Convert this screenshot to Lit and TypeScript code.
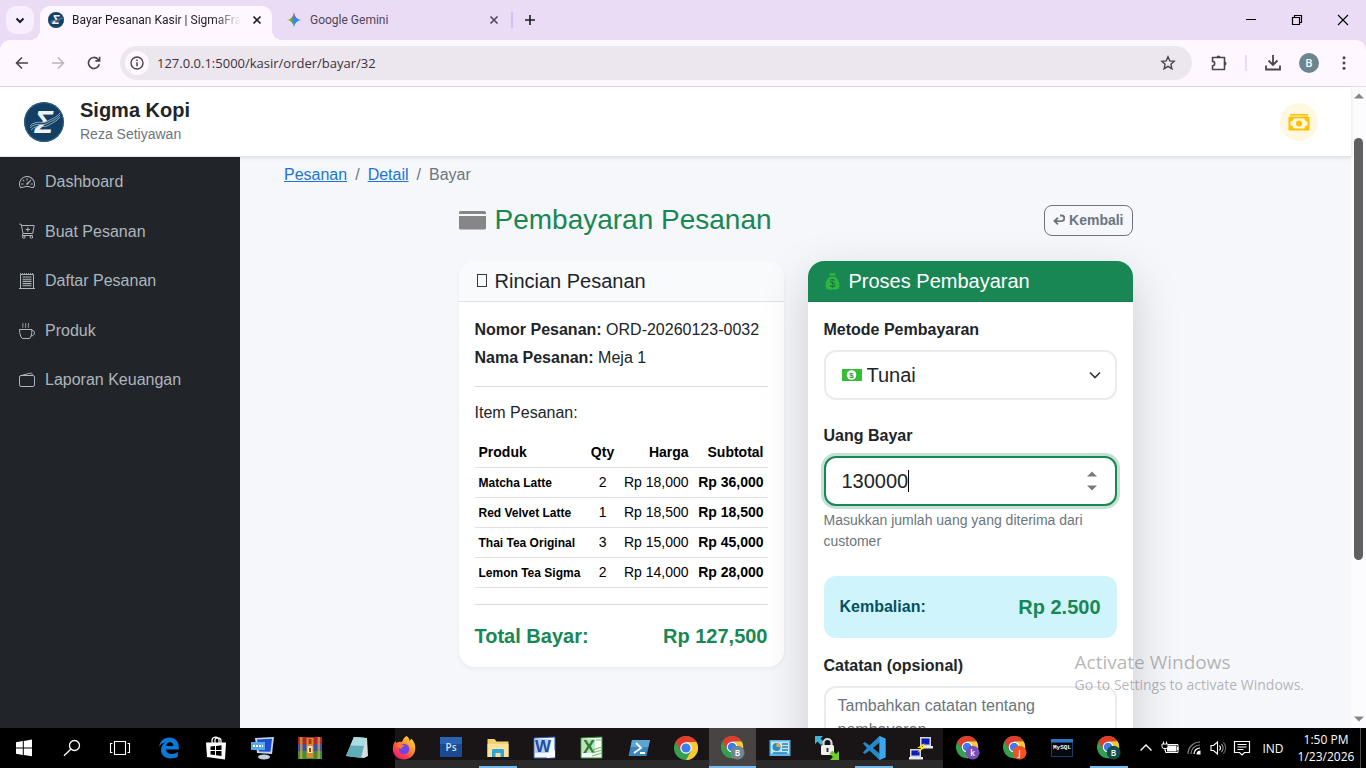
import { LitElement, css, html, svg, nothing } from "lit";
import type { SVGTemplateResult } from "lit";
import { customElement, property, state } from "lit/decorators.js";
import { classMap } from "lit/directives/class-map.js";

const SANS = css`"Liberation Sans", Arial, sans-serif`;
const UI = css`"Open Sans", "Noto Sans", sans-serif`;

/* ---------- icons ---------- */

interface Icon {
  box: string;
  body: SVGTemplateResult;
}

const chromeBody = (letter = "", badge = "") => svg`
  <circle cx="12" cy="12" r="12" fill="#34a04f" />
  <path d="M1.6 6A12 12 0 0 1 22.4 6H12L6.8 15z" fill="#e33b2e" />
  <path d="M22.4 6A12 12 0 0 1 12 24l5.2-9L12 6z" fill="#fcc934" />
  <circle cx="12" cy="12" r="5.8" fill="#fff" />
  <circle cx="12" cy="12" r="4.6" fill="#3b7ded" />
  ${
    letter
      ? svg`<circle cx="18" cy="18" r="7.5" fill=${badge} />
          <text x="18" y="21.2" text-anchor="middle" font-size="9" font-weight="600"
            font-family="Open Sans, sans-serif" fill="#fff">${letter}</text>`
      : nothing
  }`;

const ICONS: Record<string, Icon> = {
  logo: {
    box: "0 0 40 40",
    body: svg`
      <circle cx="20" cy="20" r="20" fill="#123f63" />
      <circle cx="20" cy="20" r="19.2" fill="none" stroke="#3d6b89" stroke-width=".8" />
      <text x="20" y="30.500" text-anchor="middle" font-size="31" font-weight="700" font-style="italic"
        font-family="Liberation Sans, sans-serif" fill="#eef2f7">Σ</text>
      <path d="M6 25c7-7 12-1 18-5 5-3 8-3 12-8" fill="none" stroke="#123f63" stroke-width="2.500" />
      <path d="M6 24c7-7 12-1 18-5 5-3 8-3 12-8M6 26c7-7 12-1 18-5 5-3 8-3 12-8M7 28c7-7 12-1 18-5 5-3 8-4 11-8"
        fill="none" stroke="#c5d5e2" stroke-width=".7" />`,
  },
  gemini: {
    box: "0 0 16 16",
    body: svg`
      <defs>
        <linearGradient id="gem-h" x1="0" y1="0" x2="1" y2="0">
          <stop offset="0" stop-color="#f5b915" />
          <stop offset=".4" stop-color="#3fa66a" />
          <stop offset=".55" stop-color="#3186ff" />
          <stop offset="1" stop-color="#3186ff" />
        </linearGradient>
        <linearGradient id="gem-v" x1="0" y1="0" x2="0" y2="1">
          <stop offset="0" stop-color="#ee4035" />
          <stop offset=".45" stop-color="#ee4035" stop-opacity="0" />
        </linearGradient>
      </defs>
      <path d="M8 .5C8.600 4.800 11.200 7.400 15.500 8 11.200 8.600 8.600 11.200 8 15.500 7.400 11.200 4.800 8.600.5 8 4.800 7.400 7.400 4.800 8 .5z" fill="url(#gem-h)" />
      <path d="M8 .5C8.600 4.800 11.200 7.400 15.500 8 11.200 8.600 8.600 11.200 8 15.500 7.400 11.200 4.800 8.600.5 8 4.800 7.400 7.400 4.800 8 .5z" fill="url(#gem-v)" />`,
  },
  chevron: {
    box: "0 0 16 16",
    body: svg`<path d="M4.500 6.500 8 10l3.500-3.500" fill="none" stroke="currentColor" stroke-width="2" />`,
  },
  close: {
    box: "0 0 16 16",
    body: svg`<path d="m4.500 4.500 7 7m0-7-7 7" stroke="currentColor" stroke-width="1.600" />`,
  },
  plus: {
    box: "0 0 16 16",
    body: svg`<path d="M8 3v10M3 8h10" stroke="currentColor" stroke-width="1.600" />`,
  },
  minimize: {
    box: "0 0 16 16",
    body: svg`<path d="M3 7.500h10" stroke="currentColor" />`,
  },
  restore: {
    box: "0 0 16 16",
    body: svg`<path d="M3.500 5.500h7v7h-7zM5.500 5.500v-2h7v7h-2" fill="none" stroke="currentColor" stroke-width="1.200" />`,
  },
  quit: {
    box: "0 0 16 16",
    body: svg`<path d="m3 3 10 10M13 3 3 13" stroke="currentColor" stroke-width="1.100" />`,
  },
  back: {
    box: "0 0 16 16",
    body: svg`<path d="M14 8H3M8 2.500 2.500 8 8 13.500" fill="none" stroke="currentColor" stroke-width="1.600" />`,
  },
  forward: {
    box: "0 0 16 16",
    body: svg`<path d="M2 8h11M8 2.500 13.500 8 8 13.500" fill="none" stroke="currentColor" stroke-width="1.600" />`,
  },
  reload: {
    box: "0 0 16 16",
    body: svg`<path d="M13.300 9.200A5.500 5.500 0 1 1 12 4.200l1.400 1.400M13.600 1.800v4.100H9.400" fill="none" stroke="currentColor" stroke-width="1.600" />`,
  },
  info: {
    box: "0 0 16 16",
    body: svg`<circle cx="8" cy="8" r="6" fill="none" stroke="currentColor" stroke-width="1.400" />
      <path d="M8 7.200v4M8 4.600v1.500" stroke="currentColor" stroke-width="1.500" />`,
  },
  star: {
    box: "0 0 16 16",
    body: svg`<path d="m8 1.800 1.800 4.100 4.400.4-3.300 3 1 4.400L8 11.400l-3.900 2.300 1-4.400-3.300-3 4.400-.4z" fill="none" stroke="currentColor" stroke-width="1.400" />`,
  },
  puzzle: {
    box: "0 0 18 18",
    body: svg`<path d="M2.500 3.500h12v12h-12v-3.700a2.200 2.200 0 0 0 0-4.400z" fill="none" stroke="currentColor" stroke-width="1.600" stroke-linejoin="round" />
      <path d="M6.500 3.500a2 2 0 0 1 4 0zM14.500 7.500a2 2 0 0 1 0 4z" fill="currentColor" />`,
  },
  download: {
    box: "0 0 18 18",
    body: svg`<path d="M9 1v9.500M4.500 6.500 9 11l4.500-4.500M2 11.500v4h14v-4" fill="none" stroke="currentColor" stroke-width="1.800" />`,
  },
  dots: {
    box: "0 0 16 16",
    body: svg`<g fill="currentColor"><circle cx="8" cy="2.800" r="1.500" /><circle cx="8" cy="8" r="1.500" /><circle cx="8" cy="13.200" r="1.500" /></g>`,
  },
  up: {
    box: "0 0 10 6",
    body: svg`<path d="M0 5.500h10L5 .5z" fill="currentColor" />`,
  },
  down: {
    box: "0 0 10 6",
    body: svg`<path d="M0 .5h10l-5 5z" fill="currentColor" />`,
  },
  cash: {
    box: "0 0 22 18",
    body: svg`<path d="M2 1h18v1.600H2z" fill="#ffc107" />
      <rect x=".5" y="3.500" width="21" height="14" rx="1.200" fill="#ffc107" />
      <path d="M5.500 5.500h11a3 3 0 0 0 3 3v4a3 3 0 0 0-3 3h-11a3 3 0 0 0-3-3v-4a3 3 0 0 0 3-3z" fill="#fff8e1" />
      <circle cx="11" cy="10.500" r="3" fill="#ffc107" />`,
  },
  dashboard: {
    box: "0 0 16 16",
    body: svg`<g fill="currentColor">
      <path d="M8 4a.5.5 0 0 1 .5.5V6a.5.5 0 0 1-1 0V4.500A.5.5 0 0 1 8 4M3.732 5.732a.5.5 0 0 1 .707 0l.915.914a.5.5 0 1 1-.708.708l-.914-.915a.5.5 0 0 1 0-.707M2 10a.5.5 0 0 1 .5-.5h1.586a.5.5 0 0 1 0 1H2.500A.5.5 0 0 1 2 10m9.500 0a.5.5 0 0 1 .5-.5h1.500a.5.5 0 0 1 0 1H12a.5.5 0 0 1-.5-.5m.754-4.246a.39.39 0 0 0-.527-.02L7.547 9.310a.91.91 0 1 0 1.302 1.258l3.434-4.297a.39.39 0 0 0-.029-.518z" />
      <path fill-rule="evenodd" d="M0 10a8 8 0 1 1 15.547 2.661c-.442 1.253-1.845 1.602-2.932 1.250C11.309 13.488 9.475 13 8 13c-1.474 0-3.310.488-4.615.911-1.087.352-2.490.003-2.932-1.250A8 8 0 0 1 0 10m8-7a7 7 0 0 0-6.603 9.329c.203.575.923.876 1.680.63C4.397 12.533 6.358 12 8 12s3.604.532 4.923.96c.757.245 1.477-.056 1.680-.631A7 7 0 0 0 8 3" />
    </g>`,
  },
  cart: {
    box: "0 0 16 16",
    body: svg`<g fill="none" stroke="currentColor">
      <path d="M.3 1.200h1.900l1.800 9.300M2.500 2.500h12.700l-1.500 8H4l-.7 2h10.400M8.800 4.300v4.400M6.600 6.500H11" />
      <circle cx="4.800" cy="14" r="1.300" /><circle cx="12.400" cy="14" r="1.300" /></g>`,
  },
  list: {
    box: "0 0 16 16",
    body: svg`<g fill="none" stroke="currentColor">
      <path d="M1.500 15V1.500h13V15M0 15.500h16" />
      <path d="M1 .7h14" stroke-dasharray="1 1" />
      <path d="M3.500 4h9M3.500 6.200h9M3.500 8.400h9M3.500 10.600h9M3.500 12.800h9" stroke-width="1.100" /></g>`,
  },
  cup: {
    box: "0 0 16 16",
    body: svg`<g fill="none" stroke="currentColor" stroke-linecap="round">
      <path d="M.6 6.500h12.300v1.200c0 3.200-.7 5.800-2.200 7.800H3.200C1.400 13.500.6 10.800.6 7.500z" />
      <path d="M12.900 7.500c1.500-.3 2.600.4 2.600 2.200 0 2-1.500 3.300-3.300 3.300" />
      <path d="M3.800.6c-.7.800.7 1.500 0 2.300s.4 1 .2 1.500M6.600.6c-.7.800.7 1.500 0 2.300s.4 1 .2 1.500M9.400.6c-.7.800.7 1.500 0 2.300s.4 1 .2 1.500" /></g>`,
  },
  wallet: {
    box: "0 0 16 16",
    body: svg`<g fill="none" stroke="currentColor">
      <rect x=".5" y="3.500" width="15" height="11" rx="1.600" />
      <path d="M1.500 3.700 11.600 1.100c.8-.2 1.400.2 1.500 1v1.400" /></g>`,
  },
  card: {
    box: "0 0 27 20",
    body: svg`<path d="M0 4V2.500A1.500 1.500 0 0 1 1.500 1h24A1.500 1.500 0 0 1 27 2.500V4zM0 6h27v12a1.500 1.500 0 0 1-1.500 1.500h-24A1.500 1.500 0 0 1 0 18z" fill="#868686" />`,
  },
  tofu: {
    box: "0 0 12 14",
    body: svg`<rect x="1.500" y=".5" width="9" height="12" fill="none" stroke="#212529" stroke-width=".9" />`,
  },
  bag: {
    box: "0 0 16 18",
    body: svg`<path d="M5 1h6v1.500L10.300 5H5.700L5 2.500z" fill="#2bb13d" />
      <path d="M5.300 5h5.400C13.500 7 15 9.500 15 13c0 3-1.500 4.500-3.500 4.500h-7C2.500 17.500 1 16 1 13c0-3.500 1.500-6 4.300-8z" fill="#2fb73d" />
      <path d="M4.500 4.500h7" stroke="#198754" />
      <text x="8" y="15" text-anchor="middle" font-size="10" font-family="Liberation Sans, sans-serif" fill="#146c43">$</text>`,
  },
  note: {
    box: "0 0 20 12",
    body: svg`<rect width="20" height="12" fill="#35bd35" />
      <circle cx="9.500" cy="6" r="4.800" fill="#fff" />
      <text x="9.500" y="9" text-anchor="middle" font-size="8" font-weight="700" font-family="Liberation Sans, sans-serif" fill="#2c9a34">$</text>`,
  },
  return: {
    box: "0 0 12 12",
    body: svg`<path d="M7 1.500h1.500a2.800 2.800 0 0 1 0 5.600H2M5 3.800 1.500 7.100 5 10.400" fill="none" stroke="currentColor" stroke-width="1.900" />`,
  },
  caretdown: {
    box: "0 0 16 16",
    body: svg`<path d="m3 5.500 5 5 5-5" fill="none" stroke="#343a40" stroke-width="1.700" />`,
  },

  /* taskbar */
  windows: {
    box: "0 0 24 24",
    body: svg`<path d="M4 6.200 10.800 5v6.400H4zM11.800 4.900 20 3.600v7.800h-8.200zM4 12.400h6.800v6.500L4 17.800zM11.800 12.400H20v7.900l-8.200-1.300z" fill="#fff" />`,
  },
  search: {
    box: "0 0 24 24",
    body: svg`<g fill="none" stroke="#fff" stroke-width="1.300"><circle cx="14.500" cy="9.500" r="5" /><path d="M11 13 4 19.800" /></g>`,
  },
  taskview: {
    box: "0 0 24 24",
    body: svg`<path d="M6.500 5.500h11v13h-11zM4.500 7.500h-2v9h2M19.500 7.500h2v9h-2" fill="none" stroke="#fff" stroke-width="1.100" />`,
  },
  edge: {
    box: "0 0 24 24",
    body: svg`<path d="M2 11C3 5 7 1.500 12.300 1.500 18 1.500 21.800 5.500 21.800 11v2.500H9c.2 3 2.500 4.400 5.500 4.400 2.400 0 4.500-.7 6.300-1.900v4.700c-2 1.100-4.400 1.700-7.300 1.700C7.600 22.400 4 19 4 14c0-3.200 1.700-6 4.600-7.500C5.500 6.700 3.200 8.400 2 11zm7.200-1h7.200c-.1-2.400-1.300-3.700-3.500-3.700-2.100 0-3.400 1.500-3.700 3.700z" fill="#0a78d6" />`,
  },
  store: {
    box: "0 0 24 24",
    body: svg`<path d="M8 7V4.500C8 .5 14 0 15 3.500V7M11 7V4c0-3 6-3 6 .5V7" fill="none" stroke="#fff" stroke-width="1.200" />
      <path d="M2 6.500h20l-1 17-18-2.500z" fill="#fff" />
      <path d="M6.500 10.500l4.500-.5v4H6.500zM12 9.900l5.500-.7V14H12zM6.500 15H11v4l-4.500-.6zM12 15h5.500v5L12 19.200z" fill="#000" />`,
  },
  desktop: {
    box: "0 0 24 24",
    body: svg`<ellipse cx="13" cy="21" rx="6" ry="2.500" fill="#c8cfd8" />
      <path d="M4 2 23 1l-2 17L6 17z" fill="#c4d4e6" /><path d="M6 3.500 21 2.800l-1.500 13L8 15.500z" fill="#1b4fd0" />
      <path d="M0 6h14v8H0z" fill="#59a6ea" /><path d="M2 10h10" stroke="#fff" stroke-width="2" stroke-dasharray="2 1" />`,
  },
  winrar: {
    box: "0 0 24 24",
    body: svg`<path d="M0 1h24v7H0z" fill="#b3262f" /><path d="M0 8h24v7H0z" fill="#3c4fa6" /><path d="M0 15h24v8H0z" fill="#3b8f3a" />
      <path d="M2 1h2.500v22H2zM19.500 1H22v22h-2.500z" fill="#d6a742" opacity=".75" />
      <path d="M8.500 2h7v20h-7z" fill="#d98a2b" /><path d="M9.500 10h5v7h-5z" fill="#f6e3b1" /><path d="M10.500 3h3v5h-3zM11 12h2v4h-2z" fill="#a33c18" />`,
  },
  notepad: {
    box: "0 0 24 24",
    body: svg`<path d="M9 1 22 2l1 18-4 2L1 20z" fill="#d8dcdc" /><path d="M9 1 21 2l-5 20L1 20z" fill="#5fadb9" /><path d="M9 1 21 2l-2 8L5.500 9.500z" fill="#a9dde2" />`,
  },
  firefox: {
    box: "0 0 24 24",
    body: svg`<defs><linearGradient id="ff" x1="1" y1="0" x2="0.200" y2="1">
        <stop offset="0" stop-color="#fff04a" /><stop offset=".4" stop-color="#ff9a2a" /><stop offset=".75" stop-color="#ff4049" /><stop offset="1" stop-color="#e31587" />
      </linearGradient></defs>
      <path d="M14.500 0c2 1.300 3 3 3.200 5 .8-.6 1.200-1.400 1.300-2.400 3 2.600 4.500 6 4.300 10C23 19 18.500 23.500 12 23.500S.8 19 .8 12.800C.8 9.500 2 7 3.500 5c.1 1 .5 1.600 1 2 1.700-1.300 3.500-1.600 5.500-1 1-3 2.500-5 4.500-6z" fill="url(#ff)" />
      <circle cx="12" cy="13" r="5.300" fill="#7542e5" /><path d="M5 9c3-1 6-.5 8 1-2 .3-3 1-3.500 2.500-2.500.3-4-1.500-4.500-3.500z" fill="#ff7a33" />`,
  },
  photoshop: {
    box: "0 0 24 24",
    body: svg`<rect x="1" y="1" width="22" height="20" rx="1" fill="#1c4a91" /><path d="M1 1h22v7H1z" fill="#2a62b4" />
      <text x="12" y="15" text-anchor="middle" font-size="10" font-weight="600" font-family="Open Sans, sans-serif" fill="#cfe3fb">Ps</text>`,
  },
  explorer: {
    box: "0 0 24 24",
    body: svg`<path d="M1.500 3h7l2 2.500h12V21h-21z" fill="#f3cf6e" /><path d="M1.500 8h21v13h-21z" fill="#fbe29a" />
      <path d="M6 21v-6.500c0-1 .7-1.500 1.500-1.500h9c.8 0 1.500.5 1.500 1.500V21h-3.500v-4h-5v4z" fill="#2da3d8" />`,
  },
  word: {
    box: "0 0 24 24",
    body: svg`<path d="M1 2 22 1v21H1z" fill="#f3f6fb" stroke="#2c5ca8" /><path d="M2 3h14v14H2z" fill="#b9cfee" />
      <text x="10" y="16" text-anchor="middle" font-size="17" font-weight="700" font-family="Liberation Sans, sans-serif" fill="#1c4fa0">W</text>
      <path d="M13 17c4 1 6-1 9-3v7l-8 1z" fill="#fff" />`,
  },
  excel: {
    box: "0 0 24 24",
    body: svg`<path d="M1 2 22 1v21H1z" fill="#f3fbf3" stroke="#3b8c3f" /><path d="M2 3h13v14H2z" fill="#bfe3bd" />
      <text x="9" y="17" text-anchor="middle" font-size="18" font-weight="700" font-family="Liberation Sans, sans-serif" fill="#2c7d32">X</text>
      <path d="M12 14l10-3M12 17l10-3M12 20l10-3M16 4h5" stroke="#7fba7d" stroke-width="1.200" />`,
  },
  powershell: {
    box: "0 0 24 24",
    body: svg`<path d="M5 4h18l-3.500 16h-18z" fill="#3a86bd" /><path d="M5 4h18l-1.600 7H3.500z" fill="#5ba4d4" />
      <path d="m9 7 5 5-7 5M13 17h5" fill="none" stroke="#fff" stroke-width="1.800" />`,
  },
  chrome: { box: "0 0 24 24", body: chromeBody() },
  chromeB: { box: "0 0 26 26", body: chromeBody("B", "#6f8791") },
  panel: {
    box: "0 0 24 24",
    body: svg`<path d="M1.500 4h21v16h-21z" fill="#58b4e4" /><path d="M3 5.500h18v12H3z" fill="#bfe6f8" />
      <circle cx="8.500" cy="11" r="4" fill="#2a8ac6" /><path d="M8.500 11V7a4 4 0 0 1 4 4z" fill="#f5a623" />
      <path d="M14 8h6M14 11h6M14 14h6M5 17h14" stroke="#2a7fb6" stroke-width="1.400" />`,
  },
  lock: {
    box: "0 0 24 24",
    body: svg`<path d="M0 0h8L5.500 2.500 9 6 6 9 2.500 5.500 0 8z" fill="#42b4d9" />
      <path d="M8.500 10V7a4 4 0 0 1 8 0v3" fill="none" stroke="#d8d8d8" stroke-width="2.200" />
      <rect x="6" y="9" width="13" height="10" rx="1.500" fill="#f0f0f0" /><path d="M12.500 12v4" stroke="#333" stroke-width="2" />
      <path d="M24 24h-9l3-3-3.500-3.500 3-3L21 18l3-3z" fill="#70cc2d" />`,
  },
  vscode: {
    box: "0 0 24 24",
    body: svg`<path d="m17.500 0 6 2.700v18.600l-6 2.700-10-9.500-4.600 3.500-2-1.500L5 12 .9 7.500l2-1.500 4.600 3.500zM17.500 6.500 11 12l6.500 5.500z" fill="#2489ca" fill-rule="evenodd" />
      <path d="m17.500 0 6 2.700v18.600l-6 2.700z" fill="#3ba8ee" />`,
  },
  putty: {
    box: "0 0 24 24",
    body: svg`<path d="M11 1h11v9H11zM1 13h11v8H1z" fill="#d5d5d5" /><path d="M12.500 2.500h8v6h-8zM2.500 14.500h8v5h-8z" fill="#0a1db8" />
      <path d="M14 10h10v2.500H14zM0 21h14v2.500H0z" fill="#e8e8e8" /><path d="m16 7-8 5h4l-4 5 9-6h-4z" fill="#ffe800" />`,
  },
  chromeK: { box: "0 0 26 26", body: chromeBody("k", "#7a4fb5") },
  chromeJ: { box: "0 0 26 26", body: chromeBody("J", "#f4511e") },
  mysql: {
    box: "0 0 24 24",
    body: svg`<rect x="1.500" y="3.500" width="21" height="17" fill="#05080f" stroke="#1c3c66" /><path d="M1 3h22v3.500H1z" fill="#2d78c8" />
      <text x="12" y="13" text-anchor="middle" font-size="6" font-weight="700" font-family="Liberation Mono, monospace" fill="#fff">MySQL</text>`,
  },
  chromeB2: { box: "0 0 26 26", body: chromeBody("B", "#0f4f45") },
  trayup: {
    box: "0 0 18 18",
    body: svg`<path d="m3.500 11.500 5.500-5.500 5.500 5.500" fill="none" stroke="#fff" stroke-width="1.400" />`,
  },
  battery: {
    box: "0 0 18 18",
    body: svg`<path d="M6 6.500h9.500v6H6zM16 8h1.500v3H16z" fill="#fff" /><path d="M4.500 11v2.500h12.500v-8H7" fill="none" stroke="#fff" />
      <path d="M1 5h6v2.500a2 2 0 0 1-2 2H3a2 2 0 0 1-2-2zM2.500 2.500V5M5.500 2.500V5M4 9.500V12" fill="#000" stroke="#fff" />`,
  },
  wifi: {
    box: "0 0 18 18",
    body: svg`<g fill="none" stroke="#888" stroke-width="1.200"><path d="M3 15A12 12 0 0 1 15 3" /><path d="M6 15a9 9 0 0 1 9-9" /><path d="M9 15a6 6 0 0 1 6-6" stroke="#fff" /></g>
      <path d="M11.500 15.500a4 4 0 0 1 4-4v4z" fill="#fff" />`,
  },
  volume: {
    box: "0 0 18 18",
    body: svg`<g fill="none" stroke="#fff" stroke-width="1.100"><path d="M2 6.500h2.500L8.500 3v12l-4-3.500H2z" /><path d="M10.500 6.500a4 4 0 0 1 0 5" />
      <path d="M12.500 5a6 6 0 0 1 0 8" opacity=".7" /><path d="M14.500 3.500a8 8 0 0 1 0 11" opacity=".4" /></g>`,
  },
  notify: {
    box: "0 0 18 18",
    body: svg`<path d="M1.500 2.500h15v11h-5L9 16l-2.500-2.500h-5zM4.500 5.500h9M4.500 8h9M4.500 10.500h6" fill="none" stroke="#fff" stroke-width="1.200" />`,
  },
};

@customElement("ui-icon")
export class UiIcon extends LitElement {
  static styles = css`
    :host {
      display: inline-flex;
      flex: none;
    }
    svg {
      display: block;
      width: 100%;
      height: 100%;
    }
  `;

  @property()
  name: string = "";

  render() {
    const icon = ICONS[this.name];
    if (!icon) return nothing;
    return html`<svg viewBox=${icon.box} aria-hidden="true">${icon.body}</svg>`;
  }
}

/* ---------- browser frame ---------- */

@customElement("browser-bar")
export class BrowserBar extends LitElement {
  static styles = css`
    :host {
      display: block;
      font: 12px / 16px ${UI};
      color: #1f1a24;
      background: #eadcf5;
    }
    button {
      display: flex;
      align-items: center;
      justify-content: center;
      padding: 0;
      border: 0;
      background: none;
      color: inherit;
    }
    ui-icon {
      width: 16px;
      height: 16px;
    }
    .tabs {
      display: flex;
      align-items: center;
      height: 40px;
      padding-left: 6px;
    }
    .tab-search {
      width: 28px;
      height: 28px;
      margin-right: 6px;
      border-radius: 10px;
      background: #f7effd;
    }
    .tab {
      display: flex;
      align-items: center;
      gap: 8px;
      box-sizing: border-box;
      width: 232px;
      height: 34px;
      padding: 0 8px;
      align-self: flex-end;
      color: #4f4658;
    }
    .tab.active {
      position: relative;
      padding-bottom: 6px;
      border-radius: 10px 10px 0 0;
      background: #fef7ff;
      color: #1f1a24;
    }
    .tab.idle {
      padding: 0 2px 6px 14px;
    }
    .tab.active::before,
    .tab.active::after {
      content: "";
      position: absolute;
      bottom: 0;
      width: 10px;
      height: 10px;
    }
    .tab.active::before {
      right: 100%;
      background: radial-gradient(circle at 0 0, transparent 10px, #fef7ff 10px);
    }
    .tab.active::after {
      left: 100%;
      background: radial-gradient(circle at 100% 0, transparent 10px, #fef7ff 10px);
    }
    .tab-title {
      flex: 1;
      font-family: Roboto, ${UI};
      white-space: nowrap;
    }
    .active .tab-title {
      mask-image: linear-gradient(to right, #000 84%, transparent);
    }
    .divider {
      width: 2px;
      height: 16px;
      margin-left: 7px;
      background: #d5c2f5;
    }
    .new-tab {
      margin-left: 9px;
    }
    .window {
      display: flex;
      margin-left: auto;
      color: #000;
    }
    .window button {
      width: 46px;
      height: 40px;
    }
    .toolbar {
      display: flex;
      align-items: center;
      height: 46px;
      padding: 0 14px 0 4px;
      border-bottom: 1px solid #e6dcea;
      border-radius: 10px 10px 0 0;
      background: #fef7ff;
      color: #4a4350;
    }
    .nav {
      width: 36px;
      height: 36px;
    }
    .nav[disabled] {
      color: #bcb3c0;
    }
    .omnibox {
      display: flex;
      align-items: center;
      flex: 1;
      box-sizing: border-box;
      height: 34px;
      margin-left: 8px;
      padding: 0 16px 0 5px;
      border-radius: 17px;
      background: #ece6ee;
    }
    .site {
      width: 24px;
      height: 24px;
      border-radius: 50%;
      background: #fef7ff;
    }
    .omnibox input {
      flex: 1;
      min-width: 0;
      margin-left: 8px;
      padding: 0;
      border: 0;
      outline: 0;
      background: none;
      color: #3a3340;
      font: 13px / 20px ${UI};
    }
    .tools {
      display: flex;
      align-items: center;
      gap: 17px;
      margin-left: 18px;
    }
    .tools .large {
      width: 18px;
      height: 18px;
    }
    .tools .divider {
      margin: 0;
      background: #e8dcfb;
    }
    .avatar {
      width: 20px;
      height: 20px;
      border-radius: 50%;
      background: #6b868f;
      color: #fff;
      font: 600 11px / 20px ${UI};
    }
  `;

  render() {
    return html`
      <div class="tabs">
        <button class="tab-search" aria-label="Search tabs"><ui-icon name="chevron"></ui-icon></button>
        <div class="tab active">
          <ui-icon name="logo"></ui-icon>
          <span class="tab-title">Bayar Pesanan Kasir | SigmaFra</span>
          <button aria-label="Close tab"><ui-icon name="close"></ui-icon></button>
        </div>
        <div class="tab idle">
          <ui-icon name="gemini"></ui-icon>
          <span class="tab-title">Google Gemini</span>
          <button aria-label="Close tab"><ui-icon name="close"></ui-icon></button>
        </div>
        <span class="divider"></span>
        <button class="new-tab" aria-label="New tab"><ui-icon name="plus"></ui-icon></button>
        <div class="window">
          <button aria-label="Minimize"><ui-icon name="minimize"></ui-icon></button>
          <button aria-label="Restore"><ui-icon name="restore"></ui-icon></button>
          <button aria-label="Close"><ui-icon name="quit"></ui-icon></button>
        </div>
      </div>
      <div class="toolbar">
        <button class="nav" aria-label="Back"><ui-icon name="back"></ui-icon></button>
        <button class="nav" aria-label="Forward" disabled><ui-icon name="forward"></ui-icon></button>
        <button class="nav" aria-label="Reload"><ui-icon name="reload"></ui-icon></button>
        <div class="omnibox">
          <button class="site" aria-label="Site information"><ui-icon name="info"></ui-icon></button>
          <input aria-label="Address" value="127.0.0.1:5000/kasir/order/bayar/32" />
          <button aria-label="Bookmark"><ui-icon name="star"></ui-icon></button>
        </div>
        <div class="tools">
          <button aria-label="Extensions"><ui-icon class="large" name="puzzle"></ui-icon></button>
          <span class="divider"></span>
          <button aria-label="Downloads"><ui-icon class="large" name="download"></ui-icon></button>
          <button class="avatar" aria-label="Profile">B</button>
          <button aria-label="Menu"><ui-icon name="dots"></ui-icon></button>
        </div>
      </div>
    `;
  }
}

/* ---------- order details ---------- */

interface OrderItem {
  name: string;
  qty: number;
  price: number;
}

const ITEMS: OrderItem[] = [
  { name: "Matcha Latte", qty: 2, price: 18000 },
  { name: "Red Velvet Latte", qty: 1, price: 18500 },
  { name: "Thai Tea Original", qty: 3, price: 15000 },
  { name: "Lemon Tea Sigma", qty: 2, price: 14000 },
];

const TOTAL = ITEMS.reduce((sum, item) => sum + item.qty * item.price, 0);

const rupiah = (value: number, locale = "en-US") => `Rp ${value.toLocaleString(locale)}`;

const cardStyles = css`
  :host {
    display: block;
    border-radius: 16px;
    background: #fff;
  }
  .card-header {
    display: flex;
    align-items: center;
    height: 24px;
    margin: 0;
    padding: 8px 16px;
    border-bottom: 1px solid #dee2e6;
    border-radius: 16px 16px 0 0;
    font-size: 20px;
    font-weight: 400;
    line-height: 24px;
  }
  .card-body {
    padding: 16px;
  }
`;

@customElement("order-detail")
export class OrderDetail extends LitElement {
  static styles = [
    cardStyles,
    css`
      :host {
        box-shadow: 0 2px 4px rgba(0, 0, 0, 0.05);
      }
      .card-header {
        gap: 7px;
        background: #f9fafc;
      }
      .card-header ui-icon {
        width: 12px;
        height: 14px;
        margin-left: 1px;
      }
      p {
        margin: 0 0 4px;
      }
      hr {
        margin: 16px 0;
        border: 0;
        border-top: 1px solid #d9dbde;
      }
      h3 {
        margin: 0 0 16px;
        font-size: 16px;
        font-weight: 400;
        line-height: 19px;
      }
      table {
        width: 100%;
        border-collapse: collapse;
        color: #000;
        font-size: 14px;
        line-height: 21px;
      }
      th,
      td {
        padding: 4px;
        border-bottom: 1px solid #dee2e6;
        text-align: right;
        white-space: nowrap;
      }
      .name {
        text-align: left;
      }
      .name strong {
        font-size: 12px;
        line-height: 16px;
      }
      .qty {
        text-align: center;
      }
      .total {
        display: flex;
        justify-content: space-between;
        color: #198754;
        font-size: 20px;
        font-weight: 700;
        line-height: 30px;
      }
    `,
  ];

  render() {
    return html`
      <h2 class="card-header"><ui-icon name="tofu"></ui-icon>Rincian Pesanan</h2>
      <div class="card-body">
        <p><strong>Nomor Pesanan:</strong> ORD-20260123-0032</p>
        <p><strong>Nama Pesanan:</strong> Meja 1</p>
        <hr />
        <h3>Item Pesanan:</h3>
        <table>
          <thead>
            <tr>
              <th class="name">Produk</th>
              <th class="qty">Qty</th>
              <th>Harga</th>
              <th>Subtotal</th>
            </tr>
          </thead>
          <tbody>
            ${ITEMS.map(
              (item) => html`<tr>
                <td class="name"><strong>${item.name}</strong></td>
                <td class="qty">${item.qty}</td>
                <td>${rupiah(item.price)}</td>
                <td><strong>${rupiah(item.qty * item.price)}</strong></td>
              </tr>`
            )}
          </tbody>
        </table>
        <hr />
        <div class="total"><span>Total Bayar:</span><span>${rupiah(TOTAL)}</span></div>
      </div>
    `;
  }
}

/* ---------- payment form ---------- */

@customElement("payment-form")
export class PaymentForm extends LitElement {
  static styles = [
    cardStyles,
    css`
      :host {
        box-shadow: 0 16px 48px rgba(0, 0, 0, 0.175);
      }
      .card-header {
        gap: 8px;
        border-color: #177a4c;
        background: #198754;
        color: #fff;
      }
      .card-header ui-icon {
        width: 17px;
        height: 18px;
      }
      label {
        display: block;
        margin-bottom: 8px;
        font-weight: 700;
      }
      .field {
        display: flex;
        align-items: center;
        box-sizing: border-box;
        height: 50px;
        padding: 0 12px 0 16px;
        border: 2px solid #e9ecef;
        border-radius: 12px;
        background: #fff;
        font-size: 20px;
        line-height: 30px;
      }
      .field.focus {
        padding-right: 18px;
        border-color: #198754;
        box-shadow: 0 0 0 3px rgba(25, 135, 84, 0.25);
      }
      .field select,
      .field input {
        padding: 0;
        border: 0;
        outline: 0;
        background: none;
        color: #212529;
        font: inherit;
      }
      .field select {
        flex: 1;
        appearance: none;
      }
      .field input {
        field-sizing: content;
        min-width: 20px;
        appearance: textfield;
        caret-color: transparent;
      }
      .field input::-webkit-inner-spin-button {
        display: none;
      }
      .note {
        width: 20px;
        height: 12px;
        margin-right: 5px;
      }
      .arrow {
        width: 16px;
        height: 16px;
      }
      .caret {
        width: 1px;
        height: 22px;
        background: #000;
      }
      .spin {
        display: flex;
        flex-direction: column;
        gap: 8px;
        margin-left: auto;
      }
      .spin button {
        display: flex;
        padding: 0;
        border: 0;
        background: none;
        color: #7b7b7b;
      }
      .spin ui-icon {
        width: 10px;
        height: 6px;
      }
      .group {
        margin-bottom: 24px;
      }
      .help {
        margin-top: 4px;
        color: #6c757d;
        font-size: 14px;
        line-height: 21px;
      }
      .change {
        display: flex;
        align-items: center;
        justify-content: space-between;
        margin-bottom: 16px;
        padding: 16px;
        border-radius: 12px;
        background: #cff4fc;
        color: #055160;
        font-weight: 700;
      }
      .change output {
        color: #198754;
        font-size: 20px;
        line-height: 30px;
      }
      textarea {
        display: block;
        box-sizing: border-box;
        width: 100%;
        height: 88px;
        padding: 6px 12px;
        border: 2px solid #e9ecef;
        border-radius: 12px;
        outline: 0;
        resize: none;
        color: #212529;
        font: inherit;
      }
      textarea::placeholder {
        color: #6c757d;
      }
    `,
  ];

  @state()
  paid: number = 130000;

  render() {
    return html`
      <h2 class="card-header"><ui-icon name="bag"></ui-icon>Proses Pembayaran</h2>
      <form class="card-body" @submit=${(e: Event) => e.preventDefault()}>
        <div class="group">
          <label for="method">Metode Pembayaran</label>
          <div class="field">
            <ui-icon class="note" name="note"></ui-icon>
            <select id="method">
              <option>Tunai</option>
            </select>
            <ui-icon class="arrow" name="caretdown"></ui-icon>
          </div>
        </div>
        <div class="group">
          <label for="paid">Uang Bayar</label>
          <div class="field focus">
            <input
              id="paid"
              type="number"
              .value=${String(this.paid)}
              @input=${(e: Event) => {
                this.paid = Number((e.target as HTMLInputElement).value);
              }}
            />
            <span class="caret"></span>
            <span class="spin">
              <button type="button" aria-label="Tambah" @click=${() => this._step(1)}>
                <ui-icon name="up"></ui-icon>
              </button>
              <button type="button" aria-label="Kurang" @click=${() => this._step(-1)}>
                <ui-icon name="down"></ui-icon>
              </button>
            </span>
          </div>
          <div class="help">Masukkan jumlah uang yang diterima dari customer</div>
        </div>
        <div class="change">
          <span>Kembalian:</span>
          <output for="paid">${rupiah(Math.max(0, this.paid - TOTAL), "id-ID")}</output>
        </div>
        <label for="notes">Catatan (opsional)</label>
        <textarea id="notes" placeholder="Tambahkan catatan tentang pembayaran..."></textarea>
      </form>
    `;
  }

  private _step(amount: number) {
    this.paid = Math.max(0, this.paid + amount);
  }
}

/* ---------- web page ---------- */

const MENU = [
  { icon: "dashboard", label: "Dashboard" },
  { icon: "cart", label: "Buat Pesanan" },
  { icon: "list", label: "Daftar Pesanan" },
  { icon: "cup", label: "Produk" },
  { icon: "wallet", label: "Laporan Keuangan" },
];

@customElement("kasir-page")
export class KasirPage extends LitElement {
  static styles = css`
    :host {
      display: flex;
      min-height: 0;
      background: #fff;
      color: #212529;
      font: 16px / 24px ${SANS};
    }
    .page {
      display: flex;
      flex: 1;
      flex-direction: column;
      min-width: 0;
    }
    header {
      display: flex;
      align-items: center;
      gap: 16px;
      z-index: 1;
      box-sizing: border-box;
      height: 70px;
      padding: 0 33px 0 24px;
      border-bottom: 1px solid #e3e6e8;
      background: #fff;
      box-shadow: 0 1px 4px rgba(0, 0, 0, 0.1);
    }
    .logo {
      width: 40px;
      height: 40px;
    }
    .brand {
      flex: 1;
      font-size: 20px;
      font-weight: 700;
    }
    .brand small {
      display: block;
      color: #6c757d;
      font-size: 14px;
      font-weight: 400;
    }
    .cash {
      display: flex;
      align-items: center;
      justify-content: center;
      width: 38px;
      height: 38px;
      padding: 0;
      border: 0;
      border-radius: 50%;
      background: #fff8e1;
    }
    .cash ui-icon {
      width: 22px;
      height: 18px;
    }
    .columns {
      display: flex;
      flex: 1;
      min-height: 0;
    }
    nav.side {
      flex: none;
      width: 240px;
      background: #212529;
    }
    .side a {
      display: flex;
      align-items: center;
      gap: 10px;
      padding: 12px 19px;
      color: #adb5bd;
      line-height: 1.6;
      text-decoration: none;
    }
    .side ui-icon {
      width: 16px;
      height: 16px;
    }
    main {
      flex: 1;
      min-width: 0;
      overflow: hidden;
      padding: 6px 44px 0;
      background: #f5f7fb;
    }
    .breadcrumb {
      display: flex;
      gap: 8px;
      margin-bottom: 16px;
      color: #6c757d;
    }
    .breadcrumb a {
      color: #1a73d9;
    }
    .grid {
      display: grid;
      grid-template-columns: repeat(12, minmax(0, 1fr));
      column-gap: 24px;
    }
    .content {
      grid-column: 3 / span 8;
    }
    .title-row {
      display: flex;
      align-items: center;
      justify-content: space-between;
      margin-bottom: 24px;
    }
    h1 {
      display: flex;
      align-items: center;
      gap: 9px;
      margin: 0;
      color: #198754;
      font-size: 28px;
      font-weight: 400;
      line-height: 34px;
    }
    h1 ui-icon {
      width: 27px;
      height: 20px;
    }
    .back {
      display: flex;
      align-items: center;
      gap: 4px;
      padding: 4px 8px;
      border: 1px solid #6c757d;
      border-radius: 8px;
      background: none;
      color: #6c757d;
      font: 700 14px / 21px ${SANS};
    }
    .back ui-icon {
      width: 12px;
      height: 12px;
    }
    .cards {
      display: grid;
      grid-template-columns: 1fr 1fr;
      align-items: start;
      gap: 24px;
    }
    .scrollbar {
      display: flex;
      flex-direction: column;
      align-items: center;
      justify-content: space-between;
      box-sizing: border-box;
      width: 15px;
      padding: 6px 0;
      background: #fcfcfe;
      color: #858585;
    }
    .scrollbar ui-icon {
      width: 10px;
      height: 6px;
    }
    .track {
      flex: 1;
      padding-top: 39px;
    }
    .thumb {
      width: 9px;
      height: 73%;
      border-radius: 5px;
      background: #606060;
    }
  `;

  render() {
    return html`
      <div class="page">
        <header>
          <ui-icon class="logo" name="logo"></ui-icon>
          <div class="brand">Sigma Kopi<small>Reza Setiyawan</small></div>
          <button class="cash" aria-label="Kas"><ui-icon name="cash"></ui-icon></button>
        </header>
        <div class="columns">
          <nav class="side">
            ${MENU.map(
              (item) => html`<a href="#"><ui-icon name=${item.icon}></ui-icon>${item.label}</a>`
            )}
          </nav>
          <main>
            <nav class="breadcrumb">
              <a href="#">Pesanan</a><span>/</span><a href="#">Detail</a><span>/</span><span>Bayar</span>
            </nav>
            <div class="grid">
              <div class="content">
                <div class="title-row">
                  <h1><ui-icon name="card"></ui-icon>Pembayaran Pesanan</h1>
                  <button class="back"><ui-icon name="return"></ui-icon>Kembali</button>
                </div>
                <div class="cards">
                  <order-detail></order-detail>
                  <payment-form></payment-form>
                </div>
              </div>
            </div>
          </main>
        </div>
      </div>
      <div class="scrollbar">
        <ui-icon name="up"></ui-icon>
        <div class="track"><div class="thumb"></div></div>
        <ui-icon name="down"></ui-icon>
      </div>
    `;
  }
}

/* ---------- taskbar ---------- */

interface Task {
  icon: string;
  label: string;
  open?: boolean;
  current?: boolean;
}

const TASKS: Task[] = [
  { icon: "edge", label: "Edge" },
  { icon: "store", label: "Store" },
  { icon: "desktop", label: "Remote Desktop" },
  { icon: "winrar", label: "WinRAR" },
  { icon: "notepad", label: "Notepad" },
  { icon: "firefox", label: "Firefox" },
  { icon: "photoshop", label: "Photoshop" },
  { icon: "explorer", label: "File Explorer", open: true },
  { icon: "word", label: "Word" },
  { icon: "excel", label: "Excel" },
  { icon: "powershell", label: "PowerShell" },
  { icon: "chrome", label: "Chrome" },
  { icon: "chromeB", label: "Chrome", open: true, current: true },
  { icon: "panel", label: "Control Panel" },
  { icon: "lock", label: "WinSCP" },
  { icon: "vscode", label: "Visual Studio Code", open: true },
  { icon: "putty", label: "PuTTY" },
  { icon: "chromeK", label: "Chrome" },
  { icon: "chromeJ", label: "Chrome" },
  { icon: "mysql", label: "MySQL" },
  { icon: "chromeB2", label: "Chrome", open: true },
];

@customElement("task-bar")
export class TaskBar extends LitElement {
  static styles = css`
    :host {
      display: flex;
      height: 40px;
      color: #fff;
      font: 12px / 17px ${UI};
      background: linear-gradient(#191517 80%, #2b2a2b 80%) 395px 0 / 548px 100% no-repeat #000;
    }
    button {
      display: flex;
      align-items: center;
      justify-content: center;
      box-sizing: border-box;
      height: 40px;
      padding: 0;
      border: 0;
      background: none;
      color: inherit;
      font: inherit;
    }
    .system {
      width: 48px;
    }
    .tasks {
      display: flex;
      padding-left: 1px;
    }
    .task {
      flex-direction: column;
      width: 47px;
    }
    .task.current {
      background: #484444;
    }
    .task.open::after {
      content: "";
      width: 38px;
      height: 2px;
      margin: 6px 0 -8px;
      background: #76b9ed;
    }
    .task.current::after {
      width: 100%;
    }
    ui-icon {
      width: 24px;
      height: 24px;
    }
    .tray {
      display: flex;
      align-items: center;
      margin-left: auto;
    }
    .tray button {
      width: 24px;
    }
    .tray ui-icon {
      width: 18px;
      height: 18px;
    }
    .tray .lang {
      width: 38px;
    }
    .tray .clock {
      width: 68px;
      text-align: center;
    }
    .peek {
      width: 5px;
      height: 40px;
      border-left: 1px solid #4c4c4c;
    }
  `;

  render() {
    return html`
      <button class="system" aria-label="Start"><ui-icon name="windows"></ui-icon></button>
      <button class="system" aria-label="Search"><ui-icon name="search"></ui-icon></button>
      <button class="system" aria-label="Task View"><ui-icon name="taskview"></ui-icon></button>
      <div class="tasks">
        ${TASKS.map(
          (task) => html`<button
            class=${classMap({ task: true, open: !!task.open, current: !!task.current })}
            aria-label=${task.label}
          >
            <ui-icon name=${task.icon}></ui-icon>
          </button>`
        )}
      </div>
      <div class="tray">
        ${["trayup", "battery", "wifi", "volume", "notify"].map(
          (name) => html`<button aria-label=${name}><ui-icon name=${name}></ui-icon></button>`
        )}
        <button class="lang">IND</button>
        <button class="clock">1:50 PM<br />1/23/2026</button>
        <span class="peek"></span>
      </div>
    `;
  }
}

@customElement("app-root")
export class AppRoot extends LitElement {
  static styles = css`
    :host {
      position: relative;
      display: flex;
      flex-direction: column;
      height: 100vh;
      overflow: hidden;
    }
    kasir-page {
      flex: 1;
    }
    browser-bar,
    task-bar {
      flex: none;
    }
    .watermark {
      position: absolute;
      right: 62px;
      bottom: 73px;
      color: rgba(110, 110, 110, 0.5);
      font: 14px / 20px ${UI};
      pointer-events: none;
    }
    .watermark b {
      display: block;
      font-size: 19px;
      font-weight: 400;
      line-height: 25px;
    }
  `;

  render() {
    return html`
      <browser-bar></browser-bar>
      <kasir-page></kasir-page>
      <task-bar></task-bar>
      <div class="watermark"><b>Activate Windows</b>Go to Settings to activate Windows.</div>
    `;
  }
}
